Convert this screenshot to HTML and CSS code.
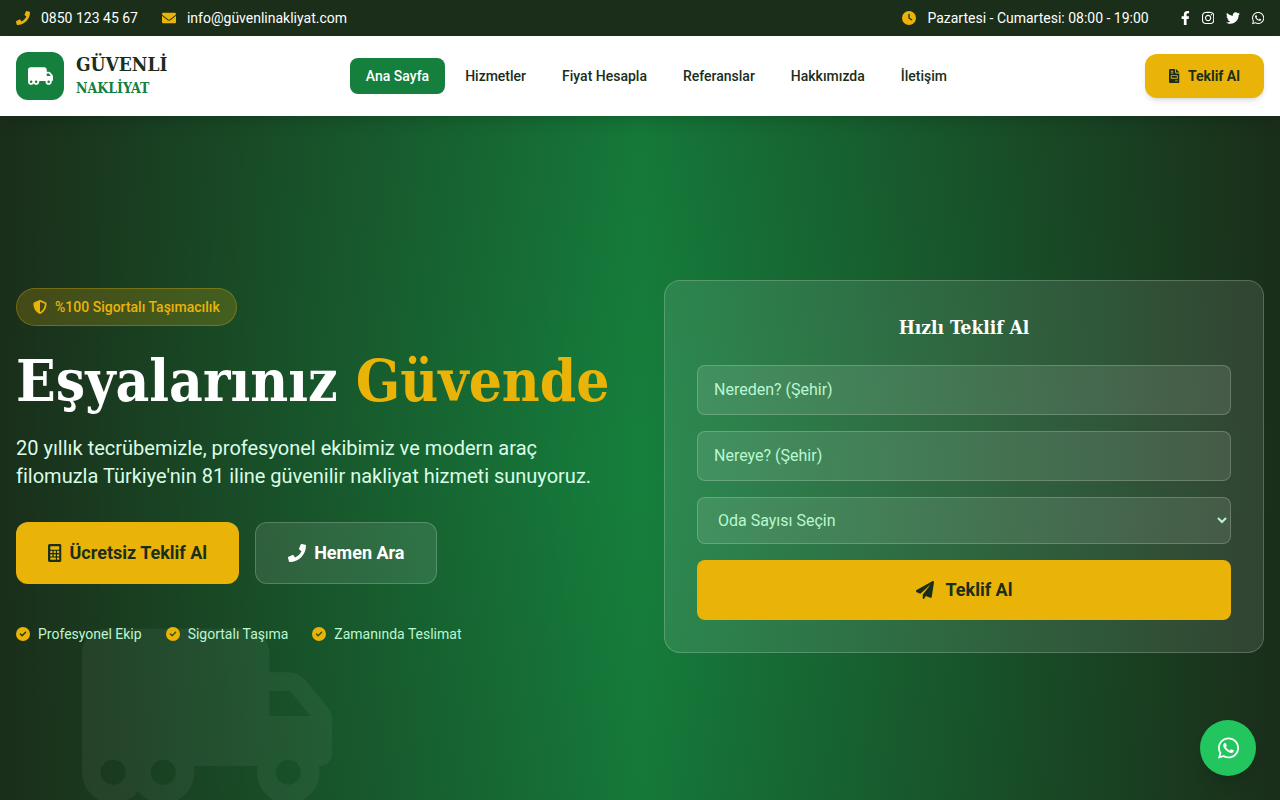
FILE: index.html
```html
<!DOCTYPE html>
<html lang="tr">
<head>
<meta charset="utf-8">
<meta name="viewport" content="width=device-width, initial-scale=1">
<title>Güvenli Nakliyat</title>
<link rel="stylesheet" href="styles.css">
</head>
<body>
<svg class="sprite" aria-hidden="true">
  <symbol id="truck" viewBox="0 0 640 512"><path d="M64 32C28.7 32 0 60.7 0 96V304v80 16c0 44.2 35.8 80 80 80c26.2 0 49.4-12.6 64-32c14.6 19.4 37.8 32 64 32c44.2 0 80-35.8 80-80c0-5.5-.6-10.8-1.6-16H416h33.6c-1 5.2-1.6 10.5-1.6 16c0 44.2 35.8 80 80 80s80-35.8 80-80c0-5.5-.6-10.8-1.6-16H608c17.7 0 32-14.3 32-32V288 272 261.7c0-9.2-3.2-18.2-9-25.3l-58.8-71.8c-10.6-13-26.5-20.5-43.3-20.5H480V96c0-35.3-28.7-64-64-64H64zM585 256H480V192h48.8c2.4 0 4.7 1.1 6.2 2.9L585 256zM528 368a32 32 0 1 1 0 64 32 32 0 1 1 0-64zM176 400a32 32 0 1 1 64 0 32 32 0 1 1 -64 0zM80 368a32 32 0 1 1 0 64 32 32 0 1 1 0-64z"/></symbol>
  <symbol id="phone" viewBox="0 0 512 512"><path d="M493.4 24.6l-104-24c-11.3-2.6-22.9 3.3-27.5 13.9l-48 112c-4.2 9.8-1.4 21.3 6.9 28l60.6 49.6c-36 76.7-98.9 140.5-177.2 177.2l-49.6-60.6c-6.8-8.3-18.2-11.1-28-6.9l-112 48C3.9 366.5-2 378.1.6 389.4l24 104C27.1 504.2 36.7 512 48 512c256.1 0 464-207.5 464-464 0-11.2-7.7-20.9-18.6-23.4z"/></symbol>
  <symbol id="envelope" viewBox="0 0 512 512"><path d="M256 352c-16.53 0-33.06-5.422-47.16-16.41L0 173.2V400C0 426.5 21.49 448 48 448h416c26.51 0 48-21.49 48-48V173.2l-208.8 162.5C289.1 346.6 272.5 352 256 352zM16.29 145.3l212.2 165.1c16.19 12.6 38.87 12.6 55.06 0l212.2-165.1C505.1 137.3 512 125 512 112C512 85.49 490.5 64 464 64h-416C21.49 64 0 85.49 0 112C0 125 6.01 137.3 16.29 145.3z"/></symbol>
  <symbol id="clock" viewBox="0 0 512 512"><path d="M256 0a256 256 0 1 1 0 512A256 256 0 1 1 256 0zM232 120V256c0 8 4 15.5 10.7 20l96 64c11 7.4 25.9 4.4 33.3-6.7s4.4-25.9-6.7-33.3L280 243.2V120c0-13.3-10.7-24-24-24s-24 10.7-24 24z"/></symbol>
  <symbol id="facebook" viewBox="0 0 320 512"><path d="M279.14 288l14.22-92.66h-88.91v-60.13c0-25.35 12.42-50.06 52.24-50.06h40.42V6.26S260.43 0 225.36 0c-73.22 0-121.08 44.38-121.08 124.72v70.62H22.89V288h81.39v224h100.17V288z"/></symbol>
  <symbol id="instagram" viewBox="0 0 448 512"><path d="M224.1 141c-63.6 0-114.9 51.3-114.9 114.9s51.3 114.9 114.9 114.9S339 319.5 339 255.9 287.7 141 224.1 141zm0 189.6c-41.1 0-74.7-33.5-74.7-74.7s33.5-74.7 74.7-74.7 74.7 33.5 74.7 74.7-33.6 74.7-74.7 74.7zm146.4-194.3c0 14.9-12 26.8-26.8 26.8-14.9 0-26.8-12-26.8-26.8s12-26.8 26.8-26.8 26.8 12 26.8 26.8zm76.1 27.2c-1.7-35.9-9.9-67.7-36.2-93.9-26.2-26.2-58-34.4-93.9-36.2-37-2.1-147.9-2.1-184.9 0-35.8 1.7-67.6 9.9-93.9 36.1s-34.4 58-36.2 93.9c-2.1 37-2.1 147.9 0 184.9 1.7 35.9 9.9 67.7 36.2 93.9s58 34.4 93.9 36.2c37 2.1 147.9 2.1 184.9 0 35.9-1.7 67.7-9.9 93.9-36.2 26.2-26.2 34.4-58 36.2-93.9 2.1-37 2.1-147.8 0-184.8zM398.8 388c-7.8 19.6-22.9 34.7-42.6 42.6-29.5 11.7-99.5 9-132.1 9s-102.7 2.6-132.1-9c-19.6-7.8-34.7-22.9-42.6-42.6-11.7-29.5-9-99.5-9-132.1s-2.6-102.7 9-132.1c7.8-19.6 22.9-34.7 42.6-42.6 29.5-11.7 99.5-9 132.1-9s102.7-2.6 132.1 9c19.6 7.8 34.7 22.9 42.6 42.6 11.7 29.5 9 99.5 9 132.1s2.7 102.7-9 132.1z"/></symbol>
  <symbol id="twitter" viewBox="0 0 512 512"><path d="M459.37 151.716c.325 4.548.325 9.097.325 13.645 0 138.72-105.583 298.558-298.558 298.558-59.452 0-114.68-17.219-161.137-47.106 8.447.974 16.568 1.299 25.34 1.299 49.055 0 94.213-16.568 130.274-44.832-46.132-.975-84.792-31.188-98.112-72.772 6.498.974 12.995 1.624 19.818 1.624 9.421 0 18.843-1.3 27.614-3.573-48.081-9.747-84.143-51.98-84.143-102.985v-1.299c13.969 7.797 30.214 12.67 47.431 13.319-28.264-18.843-46.781-51.005-46.781-87.391 0-19.492 5.197-37.36 14.294-52.954 51.655 63.675 129.3 105.258 216.365 109.807-1.624-7.797-2.599-15.918-2.599-24.04 0-57.828 46.782-104.934 104.934-104.934 30.213 0 57.502 12.67 76.67 33.137 23.715-4.548 46.456-13.32 66.599-25.34-7.798 24.366-24.366 44.833-46.132 57.827 21.117-2.273 41.584-8.122 60.426-16.243-14.292 20.791-32.161 39.308-52.628 54.253z"/></symbol>
  <symbol id="whatsapp" viewBox="0 0 448 512"><path d="M380.9 97.1C339 55.1 283.2 32 223.9 32c-122.4 0-222 99.6-222 222 0 39.1 10.2 77.3 29.6 111L0 480l117.7-30.9c32.4 17.7 68.9 27 106.1 27h.1c122.3 0 224.1-99.6 224.1-222 0-59.3-25.2-115-67.1-157zm-157 341.6c-33.2 0-65.7-8.9-94-25.7l-6.7-4-69.8 18.3L72 359.2l-4.4-7c-18.5-29.4-28.2-63.3-28.2-98.2 0-101.7 82.8-184.5 184.6-184.5 49.3 0 95.6 19.2 130.4 54.1 34.8 34.9 56.2 81.2 56.1 130.5 0 101.8-84.9 184.6-186.6 184.6zm101.2-138.2c-5.5-2.8-32.8-16.2-37.9-18-5.1-1.9-8.8-2.8-12.5 2.8-3.7 5.6-14.3 18-17.6 21.8-3.2 3.7-6.5 4.2-12 1.4-32.6-16.3-54-29.1-75.5-66-5.7-9.8 5.7-9.1 16.3-30.3 1.8-3.7.9-6.9-.5-9.7-1.4-2.8-12.5-30.1-17.1-41.2-4.5-10.8-9.1-9.3-12.5-9.5-3.2-.2-6.9-.2-10.6-.2-3.7 0-9.7 1.4-14.8 6.9-5.1 5.6-19.4 19-19.4 46.3 0 27.3 19.9 53.7 22.6 57.4 2.8 3.7 39.1 59.7 94.8 83.8 35.2 15.2 49 16.5 66.6 13.9 10.7-1.6 32.8-13.4 37.4-26.4 4.6-13 4.6-24.1 3.2-26.4-1.3-2.5-5-3.9-10.5-6.6z"/></symbol>
  <symbol id="invoice" viewBox="0 0 384 512"><path fill-rule="evenodd" d="M256 0v128h128L256 0zM288 256H96v64h192V256zM224 128L224 0H48C21.49 0 0 21.49 0 48v416C0 490.5 21.49 512 48 512h288c26.51 0 48-21.49 48-48V160h-127.1C238.3 160 224 145.7 224 128zM64 72C64 67.63 67.63 64 72 64h80C156.4 64 160 67.63 160 72v16C160 92.38 156.4 96 152 96h-80C67.63 96 64 92.38 64 88V72zM64 136C64 131.6 67.63 128 72 128h80C156.4 128 160 131.6 160 136v16C160 156.4 156.4 160 152 160h-80C67.63 160 64 156.4 64 152V136zM320 440c0 4.375-3.625 8-8 8h-80C227.6 448 224 444.4 224 440v-16c0-4.375 3.625-8 8-8h80c4.375 0 8 3.625 8 8V440zM320 240v96c0 8.875-7.125 16-16 16h-224C71.13 352 64 344.9 64 336v-96C64 231.1 71.13 224 80 224h224C312.9 224 320 231.1 320 240z"/></symbol>
  <symbol id="calculator" viewBox="0 0 384 512"><path fill-rule="evenodd" d="M336 0h-288C22.38 0 0 22.38 0 48v416C0 489.6 22.38 512 48 512h288c25.62 0 48-22.38 48-48v-416C384 22.38 361.6 0 336 0zM80 64h224q16 0 16 16v64q0 16-16 16h-224q-16 0-16-16v-64q0-16 16-16zM80 192h32q16 0 16 16v32q0 16-16 16h-32q-16 0-16-16v-32q0-16 16-16zM176 192h32q16 0 16 16v32q0 16-16 16h-32q-16 0-16-16v-32q0-16 16-16zM272 192h32q16 0 16 16v32q0 16-16 16h-32q-16 0-16-16v-32q0-16 16-16zM80 288h32q16 0 16 16v32q0 16-16 16h-32q-16 0-16-16v-32q0-16 16-16zM176 288h32q16 0 16 16v32q0 16-16 16h-32q-16 0-16-16v-32q0-16 16-16zM272 288h32q16 0 16 16v32q0 16-16 16h-32q-16 0-16-16v-32q0-16 16-16zM80 384h128q16 0 16 16v32q0 16-16 16h-128q-16 0-16-16v-32q0-16 16-16zM272 384h32q16 0 16 16v32q0 16-16 16h-32q-16 0-16-16v-32q0-16 16-16z"/></symbol>
  <symbol id="shield" viewBox="0 0 512 512"><path fill-rule="evenodd" d="M256 0c4.6 0 9.2 1 13.4 2.9L457.7 82.8c22 9.3 38.4 31 38.3 57.2c-.5 99.2-41.3 280.7-213.6 363.2c-16.7 8-36.1 8-52.8 0C57.3 420.7 16.5 239.2 16 140c-.1-26.2 16.3-47.9 38.3-57.2L242.7 2.9C246.8 1 251.4 0 256 0zM256 66.8V444.8C394 378 431.1 230.1 432 141.4L256 66.8z"/></symbol>
  <symbol id="check" viewBox="0 0 512 512"><path d="M256 512A256 256 0 1 0 256 0a256 256 0 1 0 0 512zM369 209L241 337c-9.4 9.4-24.6 9.4-33.9 0l-64-64c-9.4-9.4-9.4-24.6 0-33.9s24.6-9.4 33.9 0l47 47L335 175c9.4-9.4 24.6-9.4 33.9 0s9.4 24.6 0 33.9z"/></symbol>
  <symbol id="plane" viewBox="0 0 512 512"><path d="M511.6 36.86l-64 415.1c-1.5 9.734-7.375 18.22-15.97 23.05c-4.844 2.719-10.27 4.097-15.68 4.097c-4.188 0-8.319-.8154-12.29-2.472l-122.6-51.1l-50.86 76.29C226.3 508.5 219.8 512 212.8 512C201.3 512 192 502.7 192 491.2v-96.18c0-7.115 2.372-14.03 6.742-19.64L416 96l-293.7 264.3L19.69 317.5C8.438 312.8 .8125 302.2 .0625 289.1s5.469-23.72 16.06-29.77l448-255.1c10.69-6.109 23.88-5.547 34 1.406S513.5 24.72 511.6 36.86z"/></symbol>
</svg>

<div class="topbar">
  <div class="topbar-group">
    <a class="topbar-item" href="tel:08501234567"><svg class="icon gold"><use href="#phone"/></svg>0850 123 45 67</a>
    <a class="topbar-item" href="mailto:info@güvenlinakliyat.com"><svg class="icon gold"><use href="#envelope"/></svg>info@güvenlinakliyat.com</a>
  </div>
  <div class="topbar-group topbar-right">
    <span class="topbar-item"><svg class="icon gold"><use href="#clock"/></svg>Pazartesi - Cumartesi: 08:00 - 19:00</span>
    <div class="social">
      <a href="#" aria-label="Facebook"><svg class="icon" viewBox="0 0 320 512"><use href="#facebook"/></svg></a>
      <a href="#" aria-label="Instagram"><svg class="icon" viewBox="0 0 448 512"><use href="#instagram"/></svg></a>
      <a href="#" aria-label="Twitter"><svg class="icon" viewBox="0 0 512 512"><use href="#twitter"/></svg></a>
      <a href="#" aria-label="WhatsApp"><svg class="icon" viewBox="0 0 448 512"><use href="#whatsapp"/></svg></a>
    </div>
  </div>
</div>

<header class="header">
  <a class="logo" href="#">
    <span class="logo-mark"><svg class="icon" viewBox="0 0 640 512"><use href="#truck"/></svg></span>
    <span class="logo-text"><span class="logo-name">GÜVENLİ</span><span class="logo-sub">NAKLİYAT</span></span>
  </a>
  <nav class="nav">
    <a class="active" href="#">Ana Sayfa</a>
    <a href="#">Hizmetler</a>
    <a href="#">Fiyat Hesapla</a>
    <a href="#">Referanslar</a>
    <a href="#">Hakkımızda</a>
    <a href="#">İletişim</a>
  </nav>
  <a class="header-cta" href="#teklif"><svg class="icon" viewBox="0 0 384 512"><use href="#invoice"/></svg>Teklif Al</a>
</header>

<main class="hero">
  <svg class="hero-truck" viewBox="0 0 640 512" aria-hidden="true"><use href="#truck"/></svg>
  <div class="hero-grid">
    <section class="intro">
      <span class="badge"><svg class="icon"><use href="#shield"/></svg>%100 Sigortalı Taşımacılık</span>
      <h1>Eşyalarınız <span class="gold">Güvende</span></h1>
      <p class="lead">20 yıllık tecrübemizle, profesyonel ekibimiz ve modern araç filomuzla Türkiye'nin 81 iline güvenilir nakliyat hizmeti sunuyoruz.</p>
      <div class="actions">
        <a class="btn btn-gold" href="#teklif"><svg class="icon" viewBox="0 0 384 512"><use href="#calculator"/></svg>Ücretsiz Teklif Al</a>
        <a class="btn btn-glass" href="tel:08501234567"><svg class="icon"><use href="#phone"/></svg>Hemen Ara</a>
      </div>
      <ul class="features">
        <li><svg class="icon gold"><use href="#check"/></svg>Profesyonel Ekip</li>
        <li><svg class="icon gold"><use href="#check"/></svg>Sigortalı Taşıma</li>
        <li><svg class="icon gold"><use href="#check"/></svg>Zamanında Teslimat</li>
      </ul>
    </section>
    <form class="quote" id="teklif">
      <h2>Hızlı Teklif Al</h2>
      <input class="field" type="text" placeholder="Nereden? (Şehir)" aria-label="Nereden? (Şehir)">
      <input class="field" type="text" placeholder="Nereye? (Şehir)" aria-label="Nereye? (Şehir)">
      <select class="field" aria-label="Oda Sayısı Seçin"><option>Oda Sayısı Seçin</option></select>
      <button class="submit" type="submit"><svg class="icon"><use href="#plane"/></svg>Teklif Al</button>
    </form>
  </div>
</main>

<a class="fab" href="#" aria-label="WhatsApp"><svg class="icon" viewBox="0 0 448 512"><use href="#whatsapp"/></svg></a>
</body>
</html>
```

FILE: styles.css
```css
:root {
  --dark: #1a2e1a;
  --green: #15803d;
  --gold: #eab308;
  --mint: #bbf7d0;
  --slab: "Roboto Slab", "DejaVu Serif Condensed", "DejaVu Serif", serif;
}

*, *::before, *::after { box-sizing: border-box; }

body {
  margin: 0;
  background: #fff;
  color: var(--dark);
  font-family: Roboto, "Liberation Sans", sans-serif;
  font-size: 16px;
  line-height: 24px;
}

a { color: inherit; text-decoration: none; }
h1, h2, p, ul { margin: 0; padding: 0; }

.sprite { display: none; }

.icon {
  display: block;
  flex: none;
  width: 1em;
  height: 1em;
  fill: currentColor;
}
.icon[viewBox] { width: auto; }
.gold { color: var(--gold); }

.topbar {
  display: flex;
  justify-content: space-between;
  align-items: center;
  padding: 8px 16px;
  background: var(--dark);
  color: #fff;
  font-size: 14px;
  line-height: 20px;
}
.topbar-group { display: flex; align-items: center; gap: 24px; }
.topbar-right { gap: 32px; }
.topbar-item { display: flex; align-items: center; gap: 11px; }
.social { display: flex; align-items: center; gap: 12px; }

.header {
  position: relative;
  z-index: 2;
  display: flex;
  justify-content: space-between;
  align-items: center;
  padding: 16px;
  background: #fff;
  box-shadow: 0 10px 15px -3px rgba(0, 0, 0, .1), 0 4px 6px -4px rgba(0, 0, 0, .1);
}
.logo { display: flex; align-items: center; gap: 12px; }
.logo-mark {
  display: grid;
  place-items: center;
  width: 48px;
  height: 48px;
  border-radius: 12px;
  background: var(--green);
  color: #fff;
  font-size: 20px;
}
.logo-text {
  display: flex;
  flex-direction: column;
  font-family: var(--slab);
}
.logo-name { font-size: 19px; line-height: 24px; font-weight: 700; }
.logo-sub { font-size: 14px; line-height: 24px; font-weight: 700; color: var(--green); }

.nav { display: flex; gap: 4px; }
.nav a {
  padding: 8px 16px;
  border-radius: 8px;
  font-size: 14px;
  line-height: 20px;
  font-weight: 500;
}
.nav .active { background: var(--green); color: #fff; }

.header-cta {
  display: flex;
  align-items: center;
  gap: 8px;
  padding: 12px 24px;
  border-radius: 12px;
  background: var(--gold);
  font-size: 14px;
  line-height: 20px;
  font-weight: 700;
  box-shadow: 0 4px 6px -1px rgba(0, 0, 0, .1), 0 2px 4px -2px rgba(0, 0, 0, .1);
}

.hero {
  position: relative;
  display: flex;
  align-items: center;
  min-height: 700px;
  padding: 32px 16px;
  overflow: hidden;
  background:
    linear-gradient(180deg, rgba(26, 46, 26, .1), rgba(26, 46, 26, 0) 50%, rgba(26, 46, 26, .1)),
    linear-gradient(90deg, var(--dark), var(--green) 50%, var(--dark));
  color: #fff;
}
.hero-truck {
  position: absolute;
  left: 82px;
  bottom: 0;
  height: 200px;
  fill: rgba(255, 255, 255, .05);
}
.hero-grid {
  position: relative;
  flex: 1;
  display: grid;
  grid-template-columns: 1fr 1fr;
  align-items: center;
  gap: 48px;
}
.intro { display: flex; flex-direction: column; align-items: flex-start; }
.badge {
  display: flex;
  align-items: center;
  gap: 8px;
  margin-bottom: 24px;
  padding: 8px 16px;
  border: 1px solid rgba(234, 179, 8, .3);
  border-radius: 20px;
  background: rgba(234, 179, 8, .2);
  color: var(--gold);
  font-size: 14px;
  line-height: 20px;
  font-weight: 500;
}
h1 {
  margin-bottom: 22px;
  font-family: var(--slab);
  font-size: 58px;
  line-height: 62px;
  font-weight: 700;
}
.lead {
  margin-bottom: 32px;
  color: #dcfce7;
  font-size: 20px;
  line-height: 28px;
}
.actions { display: flex; gap: 16px; margin-bottom: 40px; }
.btn {
  display: flex;
  align-items: center;
  gap: 8px;
  padding: 16px 32px;
  border-radius: 12px;
  font-size: 18px;
  line-height: 28px;
  font-weight: 700;
}
.btn-gold { background: var(--gold); color: var(--dark); }
.btn-glass {
  border: 1px solid rgba(255, 255, 255, .2);
  background: rgba(255, 255, 255, .1);
}
.features {
  display: flex;
  gap: 24px;
  list-style: none;
  color: var(--mint);
  font-size: 14px;
  line-height: 20px;
}
.features li { display: flex; align-items: center; gap: 8px; }

.quote {
  display: flex;
  flex-direction: column;
  gap: 16px;
  padding: 32px;
  border: 1px solid rgba(255, 255, 255, .2);
  border-radius: 16px;
  background: rgba(255, 255, 255, .1);
}
.quote h2 {
  margin-bottom: 8px;
  font-family: var(--slab);
  font-size: 19px;
  line-height: 28px;
  font-weight: 700;
  text-align: center;
}
.field {
  width: 100%;
  padding: 12px 16px;
  border: 1px solid rgba(255, 255, 255, .2);
  border-radius: 8px;
  background: rgba(255, 255, 255, .1);
  color: var(--mint);
  font-family: inherit;
  font-size: 16px;
  line-height: 24px;
}
.field::placeholder { color: var(--mint); opacity: 1; }
.submit {
  display: flex;
  justify-content: center;
  align-items: center;
  gap: 12px;
  padding: 16px;
  border: 0;
  border-radius: 8px;
  background: var(--gold);
  color: var(--dark);
  font-family: inherit;
  font-size: 18px;
  line-height: 28px;
  font-weight: 700;
}

.fab {
  position: fixed;
  right: 24px;
  bottom: 24px;
  z-index: 3;
  display: grid;
  place-items: center;
  width: 56px;
  height: 56px;
  border-radius: 50%;
  background: #22c55e;
  color: #fff;
  font-size: 24px;
  box-shadow: 0 10px 15px -3px rgba(0, 0, 0, .1), 0 4px 6px -4px rgba(0, 0, 0, .1);
}
```
